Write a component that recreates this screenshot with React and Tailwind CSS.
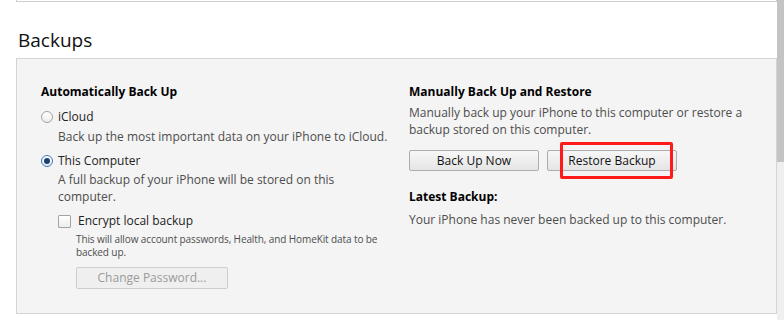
import React from "react";

const font = { fontFamily: '"Open Sans", "Noto Sans", sans-serif' };

const Radio = ({ checked }) => (
  <span className={`w-[12px] h-[12px] rounded-full border flex items-center justify-center shrink-0 bg-gradient-to-b from-white to-[#ececec] ${checked ? "border-[#3b78c4]" : "border-[#a3a3a3]"}`}>
    {checked && <span className="w-[6px] h-[6px] rounded-full bg-[#1d3f72]" />}
  </span>
);

const App = () => {
  return (
    <div className="w-[784px] h-[320px] bg-white flex overflow-hidden text-[12px] text-[#4d4d4d]" style={font}>
      <div className="w-[777px] pl-4 shrink-0">
        {/* end of the box above */}
        <div className="h-[2px] w-[761px] border-l border-r border-b border-[#cfcfcf]" />

        <h2 className="mt-[26px] ml-[2px] text-[19px] leading-[24px] text-[#111]">Backups</h2>

        {/* panel */}
        <div className="mt-[6px] w-[761px] h-[256px] border border-[#d4d4d4] bg-[#f4f4f4] flex">
          {/* left column */}
          <div className="w-[392px] shrink-0 pl-6 pt-6">
            <div className="font-bold text-black leading-[18px]">Automatically Back Up</div>

            <label className="mt-[7px] h-[18px] flex items-center gap-[5px] text-[#222]">
              <Radio />
              <span>iCloud</span>
            </label>
            <div className="mt-[2px] ml-[17px] leading-[18px] whitespace-nowrap">
              Back up the most important data on your iPhone to iCloud.
            </div>

            <label className="mt-[6px] h-[18px] flex items-center gap-[5px] text-[#222]">
              <Radio checked />
              <span>This Computer</span>
            </label>
            <div className="mt-[1px] ml-[17px] leading-[17px] w-[300px]">
              A full backup of your iPhone will be stored on this computer.
            </div>

            <label className="mt-[7px] ml-[17px] h-[18px] flex items-center gap-[7px] text-[#222]">
              <span className="w-[13px] h-[13px] border border-[#a3a3a3] rounded-[1px] bg-gradient-to-b from-white to-[#ededed]" />
              <span>Encrypt local backup</span>
            </label>
            <div className="mt-[3px] ml-[35px] text-[10px] tracking-[-0.1px] leading-[13px] w-[310px]">
              This will allow account passwords, Health, and HomeKit data to be backed up.
            </div>

            <button
              disabled
              className="mt-[8px] ml-[35px] w-[152px] h-[22px] border border-[#cdcdcd] rounded-[2px] bg-[#efefef] text-[#9b9b9b] text-[12px] leading-none"
            >
              Change Password...
            </button>
          </div>

          {/* right column */}
          <div className="pt-6 w-[350px]">
            <div className="font-bold text-black leading-[18px]">Manually Back Up and Restore</div>
            <div className="mt-[3px] leading-[17px] w-[345px]">
              Manually back up your iPhone to this computer or restore a backup stored on this computer.
            </div>

            <div className="mt-[12px] flex gap-2">
              <button className="w-[130px] h-[21px] border border-[#adadad] rounded-[2px] bg-gradient-to-b from-[#f7f7f7] to-[#e5e5e5] text-[#111] text-[12px] leading-none">
                Back Up Now
              </button>
              <div className="relative">
                <button className="w-[130px] h-[21px] border border-[#adadad] rounded-[2px] bg-gradient-to-b from-[#f7f7f7] to-[#e5e5e5] text-[#111] text-[12px] leading-none">
                  Restore Backup
                </button>
                <div className="absolute left-[13px] right-[4px] top-[-8px] bottom-[-8px] border-[3px] border-[#ff1a1a] rounded-[2px] pointer-events-none" />
              </div>
            </div>

            <div className="mt-[17px] font-bold text-black leading-[18px]">Latest Backup:</div>
            <div className="mt-[5px] leading-[18px]">Your iPhone has never been backed up to this computer.</div>
          </div>
        </div>
      </div>

      {/* scrollbar */}
      <div className="w-[7px] h-full bg-[#efefef] flex flex-col">
        <div className="h-[162px] bg-[#c4c4c4]" />
      </div>
    </div>
  );
};

export default App;
